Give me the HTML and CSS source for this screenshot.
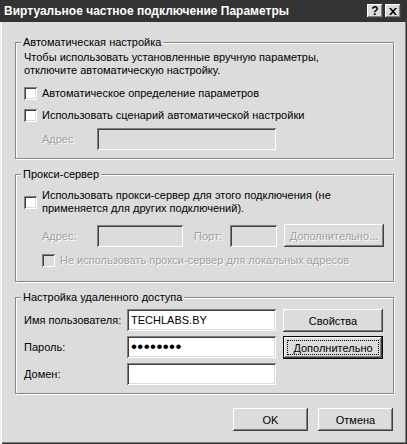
FILE: index.html
```html
<!DOCTYPE html>
<html lang="ru">
<head>
  <meta charset="UTF-8" />
  <title>Виртуальное частное подключение Параметры</title>
  <link rel="stylesheet" href="styles.css">
</head>
<body>
  <div class="window">
    <div class="titlebar">
      <span class="title">Виртуальное частное подключение Параметры</span>
      <div class="caption">
        <span class="cap-btn">?</span>
        <span class="cap-btn">
          <svg width="8" height="7" viewBox="0 0 8 7"><path d="M0 0h2l2 2.2L6 0h2L5 3.5 8 7H6L4 4.8 2 7H0l3-3.5z" fill="#000"/></svg>
        </span>
      </div>
    </div>

    <div class="client">
      <fieldset class="group g-auto">
        <legend>Автоматическая настройка</legend>
        <p class="hint">Чтобы использовать установленные вручную параметры,<br>отключите автоматическую настройку.</p>
        <label class="check c1"><span class="box"></span>Автоматическое определение параметров</label>
        <label class="check c2"><span class="box"></span>Использовать сценарий автоматической настройки</label>
        <div class="row addr disabled">
          <span class="lbl">Адрес</span>
          <span class="field off w-long"></span>
        </div>
      </fieldset>

      <fieldset class="group g-proxy">
        <legend>Прокси-сервер</legend>
        <label class="check two"><span class="box"></span><span>Использовать прокси-сервер для этого подключения (не<br>применяется для других подключений).</span></label>
        <div class="row proxy disabled">
          <span class="lbl">Адрес:</span>
          <span class="field off w-host"></span>
          <span class="lbl port">Порт:</span>
          <span class="field off w-port"></span>
          <span class="btn off">Дополнительно...</span>
        </div>
        <label class="check local disabled"><span class="box off"></span>Не использовать прокси-сервер для локальных адресов</label>
      </fieldset>

      <fieldset class="group g-remote">
        <legend>Настройка удаленного доступа</legend>
        <div class="remote">
          <span class="lbl">Имя пользователя:</span>
          <span class="field">TECHLABS.BY</span>
          <span class="btn">Свойства</span>
          <span class="lbl">Пароль:</span>
          <span class="field pass">••••••••</span>
          <span class="btn default"><span class="focus">Дополнительно</span></span>
          <span class="lbl">Домен:</span>
          <span class="field"></span>
        </div>
      </fieldset>

      <div class="footer">
        <span class="btn wide">OK</span>
        <span class="btn wide">Отмена</span>
      </div>
    </div>
  </div>
</body>
</html>
```

FILE: styles.css
```css
* {
  box-sizing: border-box;
}
body {
  margin: 0;
  background: #fff;
  font-family: "Liberation Sans", Arial, sans-serif;
  font-size: 11px;
  color: #000;
}
.window {
  width: 407px;
  height: 444px;
  background: #dcdcdc;
  display: flex;
  flex-direction: column;
  box-shadow: inset 1px 0 #ececec, inset 2px 0 #fff, inset -1px -1px #2e2e2e, inset -2px -2px #808080;
}
.titlebar {
  height: 22px;
  background: #333;
  color: #fff;
  display: flex;
  align-items: center;
  justify-content: space-between;
  padding: 0 6px 0 4px;
}
.title {
  font-weight: bold;
  font-size: 12px;
}
.caption {
  display: flex;
  gap: 2px;
}
.cap-btn {
  width: 16px;
  height: 14px;
  background: #dcdcdc;
  color: #000;
  font-weight: bold;
  font-size: 12px;
  display: flex;
  align-items: center;
  justify-content: center;
  box-shadow: inset -1px -1px #404040, inset 1px 1px #fff, inset -2px -2px #808080;
}
.client {
  flex: 1;
  padding: 14px 13px 0 15px;
  display: flex;
  flex-direction: column;
}
.group {
  margin: 0;
  padding: 0 8px;
  min-width: 0;
  border: 1px solid #888;
  box-shadow: inset 1px 1px #fff, 1px 1px #fff;
}
.group legend {
  padding: 0 2px;
  margin-left: -3px;
  line-height: 13px;
  background: #dcdcdc;
}
.g-auto {
  padding-bottom: 8px;
}
.g-proxy {
  margin-top: 9px;
  padding-bottom: 14px;
}
.g-remote {
  margin-top: 9px;
  padding-bottom: 8px;
}
.hint {
  margin: 2px 0 0;
  line-height: 13px;
}
.check {
  display: flex;
  align-items: center;
  gap: 5px;
  line-height: 13px;
}
.box {
  width: 13px;
  height: 13px;
  flex: none;
  background: #fff;
  box-shadow: inset 1px 1px #808080, inset -1px -1px #fff, inset 2px 2px #404040, inset -2px -2px #dcdcdc;
}
.box.off {
  background: #dcdcdc;
}
.c1 {
  margin-top: 10px;
}
.c2 {
  margin-top: 9px;
}
.two {
  margin-top: 8px;
}
.local {
  margin: 7px 0 0 18px;
}
.row {
  display: flex;
  align-items: center;
  margin-left: 18px;
}
.addr {
  margin-top: 6px;
}
.proxy {
  margin-top: 9px;
}
.row .lbl {
  width: 55px;
}
.row .port {
  width: 36px;
  margin-left: 11px;
}
.disabled {
  color: #a0a0a0;
  text-shadow: 1px 1px #fff;
}
.field {
  height: 22px;
  background: #fff;
  padding: 0 4px;
  line-height: 22px;
  white-space: nowrap;
  box-shadow: inset 1px 1px #808080, inset -1px -1px #fff, inset 2px 2px #404040, inset -2px -2px #dcdcdc;
}
.field.off {
  background: #dcdcdc;
}
.w-long {
  width: 179px;
}
.w-host {
  width: 86px;
}
.w-port {
  width: 47px;
}
.btn {
  height: 23px;
  display: flex;
  align-items: center;
  justify-content: center;
  background: #dcdcdc;
  white-space: nowrap;
  box-shadow: inset -1px -1px #404040, inset 1px 1px #fff, inset -2px -2px #808080;
}
.proxy .btn {
  width: 100px;
  margin-left: 7px;
}
.remote {
  margin-top: 5px;
  display: grid;
  grid-template-columns: 103px 149px 107px;
  grid-auto-rows: 22px;
  row-gap: 5px;
}
.remote .lbl {
  align-self: center;
}
.remote .btn {
  margin-left: 7px;
  width: 100px;
}
.pass {
  font-size: 17px;
  letter-spacing: 0.4px;
}
.btn.default {
  padding: 4px;
  box-shadow: inset 0 0 0 1px #000, inset -2px -2px #404040, inset 2px 2px #fff, inset -3px -3px #808080;
}
.focus {
  flex: 1;
  align-self: stretch;
  display: flex;
  align-items: center;
  justify-content: center;
  outline: 1px dotted #000;
  outline-offset: -1px;
}
.footer {
  margin-top: 14px;
  display: flex;
  justify-content: flex-end;
  gap: 10px;
  padding-right: 1px;
}
.wide {
  width: 75px;
}
```
